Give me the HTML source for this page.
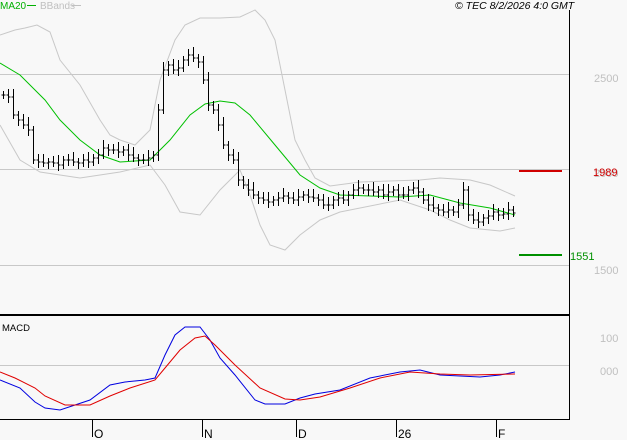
<!DOCTYPE html><html><head><style>
html,body{margin:0;padding:0;background:#f8f8f8;}
svg{display:block}
text{font-family:"Liberation Sans",sans-serif;}
</style></head><body>
<svg id="s" width="627" height="440" xmlns="http://www.w3.org/2000/svg">
<rect width="627" height="440" fill="#f8f8f8"/>
<g stroke="#c8c8c8" stroke-width="1">
<line x1="0" y1="74.5" x2="569" y2="74.5"/>
<line x1="0" y1="169.5" x2="569" y2="169.5"/>
<line x1="0" y1="265.5" x2="569" y2="265.5"/>
<line x1="0" y1="365.5" x2="569" y2="365.5"/>
</g>
<g fill="none" stroke="#c8c8c8" stroke-width="1">
<polyline points="0,35 15,30 25,28 37,25 50,32 60,60 80,85 100,120 110,135 120,140 135,145 150,130 160,80 175,40 185,25 200,18 220,18 240,17 255,10 265,20 275,40 285,90 295,140 305,160 315,178 330,186 360,182 420,180 440,178 470,180 490,185 515,196"/>
<polyline points="0,125 20,160 40,172 80,178 120,172 150,165 165,185 180,212 200,215 220,190 240,170 250,195 260,225 270,245 285,250 300,235 320,220 340,212 400,200 430,210 450,220 470,228 500,231 515,228"/>
</g>
<polyline fill="none" stroke="#00c000" stroke-width="1" points="0,63 20,75 45,100 60,120 80,140 100,155 120,162 150,160 170,140 190,115 205,104 220,101 235,103 250,115 275,145 300,175 320,188 340,195 400,197 430,195 460,203 490,208 515,215"/>
<g id="bars" stroke="#000" stroke-width="1"></g>
<polyline fill="none" stroke="#0000e0" stroke-width="1" points="0,380 20,388 35,402 45,408 60,410 75,405 90,400 110,385 125,382 145,380 155,378 165,355 175,335 185,327 200,327 210,340 220,358 235,375 255,400 265,404 285,404 300,398 315,394 340,390 370,378 400,372 420,370 440,375 460,376 480,377 500,375 515,372"/>
<polyline fill="none" stroke="#e00000" stroke-width="1" points="0,372 15,378 35,388 45,396 65,405 90,405 110,396 130,388 155,380 165,368 180,350 195,338 205,336 215,345 235,365 260,388 285,399 300,400 320,397 350,388 380,378 410,372 440,374 470,375 515,374"/>
<line x1="0" y1="315" x2="570" y2="315" stroke="#000" stroke-width="2"/>
<line x1="569.5" y1="10" x2="569.5" y2="420" stroke="#000" stroke-width="1"/>
<line x1="0" y1="419.5" x2="570" y2="419.5" stroke="#000" stroke-width="1"/>
<g stroke="#000"><line x1="92.5" y1="420" x2="92.5" y2="437"/><line x1="202.5" y1="420" x2="202.5" y2="437"/><line x1="296.5" y1="420" x2="296.5" y2="437"/><line x1="396.5" y1="420" x2="396.5" y2="437"/><line x1="496.5" y1="420" x2="496.5" y2="437"/></g>
<g font-size="12" fill="#000"><text x="94" y="438">O</text><text x="204" y="438">N</text><text x="298" y="438">D</text><text x="398" y="438">26</text><text x="498" y="438">F</text></g>
<text x="2" y="331" font-size="9.5" fill="#000">MACD</text>
<text x="0" y="9" font-size="10" fill="#00b000">MA20</text><line x1="27" y1="5.5" x2="36" y2="5.5" stroke="#00b000"/>
<text x="40" y="9" font-size="10" fill="#c0c0c0">BBands</text><line x1="72" y1="5.5" x2="81" y2="5.5" stroke="#c0c0c0"/>
<text x="455" y="9" font-size="10.5" font-style="italic" fill="#000">© TEC 8/2/2026 4:0 GMT</text>
<g font-size="11" fill="#c0c0c0"><text x="594" y="82">2500</text><text x="594" y="177">2000</text><text x="594" y="274">1500</text><text x="600" y="342">100</text><text x="600" y="375">000</text></g>
<line x1="519" y1="171" x2="562" y2="171" stroke="#d00000" stroke-width="2"/>
<text x="593" y="176" font-size="11" fill="#d00000">1989</text>
<line x1="519" y1="255" x2="562" y2="255" stroke="#009000" stroke-width="2"/>
<text x="570" y="260" font-size="11" fill="#009000">1551</text>
</svg>
<script>
var c=[95,97,115,120,125,130,160,162,163,162,163,165,160,160,162,163,160,162,158,155,148,150,150,152,150,155,158,160,160,158,155,110,70,65,70,68,60,55,58,62,80,105,110,125,145,155,160,180,185,190,195,198,200,202,200,198,196,198,200,197,195,197,198,200,205,205,200,198,200,195,190,188,190,190,192,190,195,192,190,195,195,190,188,192,200,205,208,210,212,210,212,205,190,215,220,222,218,216,212,215,214,210,213];
var g=document.getElementById('bars'),ns='http://www.w3.org/2000/svg',h='';
for(var i=0;i<c.length;i++){var x=3+i*5+.5,y=c[i],p=i?c[i-1]:y;var hi=Math.min(y,p)-4-(i%3)*2,lo=Math.max(y,p)+4+(i%2)*2;
h+='<line x1="'+x+'" y1="'+hi+'" x2="'+x+'" y2="'+lo+'"/><line x1="'+(x-2)+'" y1="'+p+'" x2="'+x+'" y2="'+p+'"/><line x1="'+x+'" y1="'+y+'" x2="'+(x+2)+'" y2="'+y+'"/>';}
g.innerHTML=h;
</script>
</body></html>
